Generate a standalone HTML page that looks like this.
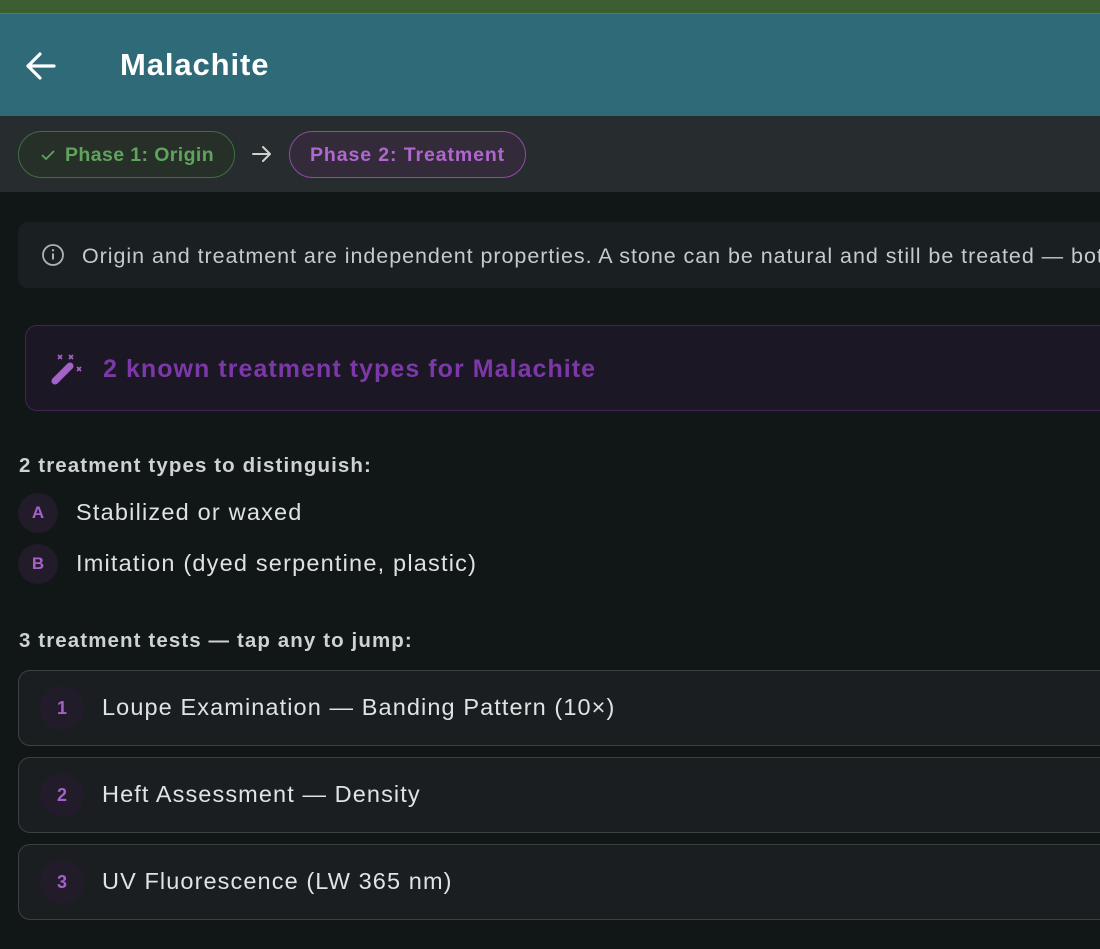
<!DOCTYPE html>
<html><head><style>
*{margin:0;padding:0;box-sizing:border-box}
body{width:1100px;height:949px;overflow:hidden;background:#111617;font-family:"Liberation Sans",sans-serif;position:relative}
.abs{position:absolute}
.top{left:0;top:0;width:1100px;height:14px;background:#3b5e33;border-bottom:1px solid #5a7d4e}
.hdr{left:0;top:14px;width:1100px;height:102px;background:#2e6a77}
.ttl{left:120px;top:47px;color:#fff;font-weight:bold;font-size:31px;letter-spacing:0.9px}
.ph{left:0;top:116px;width:1100px;height:76px;background:#272c2e}
.pill{top:131px;height:47px;border-radius:24px;font-weight:bold;font-size:19.5px;line-height:46px;white-space:nowrap;letter-spacing:0.9px}
.clip{left:0;top:0;width:1100px;height:949px;overflow:hidden}
.info{left:18px;top:222px;width:1082px;height:66px;background:#1a1f21;border-radius:10px 0 0 10px;color:#c5cacd;font-size:21.5px;line-height:68px;padding-left:64px;white-space:nowrap;letter-spacing:0.95px;overflow:hidden}
.purp{left:25px;top:325px;width:1075px;height:86px;background:#1c1724;border:1.5px solid #3f2554;border-right:none;border-radius:12px 0 0 12px;color:#7c38a8;font-weight:bold;font-size:25px;line-height:86px;padding-left:77px;letter-spacing:1.05px;white-space:nowrap}
.h{left:19px;color:#cfd2d3;font-weight:bold;font-size:20.5px;letter-spacing:1.1px;white-space:nowrap}
.b{left:18px;width:40px;height:40px;border-radius:50%;background:#221b2a;color:#a462c9;font-weight:bold;font-size:17px;text-align:center;line-height:40px}
.bt{left:76px;color:#dfe2e3;font-size:23.5px;letter-spacing:1.2px;white-space:nowrap}
.card{left:18px;width:1082px;height:76px;border:1.5px solid #3b4042;border-right:none;border-radius:12px 0 0 12px;background:#1a1e20}
.card .n{position:absolute;left:21px;top:15px;width:44px;height:44px;border-radius:50%;background:#221b2a;color:#a462c9;font-weight:bold;font-size:18px;text-align:center;line-height:44px}
.card .t{position:absolute;left:83px;top:0;line-height:73px;color:#e0e3e4;font-size:23.5px;white-space:nowrap;letter-spacing:1.1px}
</style></head><body>
<div class="abs top"></div>
<div class="abs hdr"></div>
<svg class="abs" style="left:24px;top:50px" width="34" height="32" viewBox="0 0 34 32"><path d="M30 16H4M16 4L4 16l12 12" fill="none" stroke="#fff" stroke-width="3.2" stroke-linecap="round" stroke-linejoin="round"/></svg>
<div class="abs ttl">Malachite</div>
<div class="abs ph"></div>
<div class="abs pill" style="left:18px;width:217px;border:1.5px solid #3f6e3f;color:#5fa35c;background:#263028;padding-left:46px;letter-spacing:0.4px">Phase 1: Origin</div>
<svg class="abs" style="left:40px;top:147px" width="16" height="16" viewBox="0 0 16 16"><path d="M2 8l4 4 8-8" fill="none" stroke="#5fa35c" stroke-width="1.8"/></svg>
<svg class="abs" style="left:251px;top:144px" width="22" height="20" viewBox="0 0 22 20"><path d="M2 10h17M12 3l7 7-7 7" fill="none" stroke="#d0d0d0" stroke-width="2" stroke-linecap="round" stroke-linejoin="round"/></svg>
<div class="abs pill" style="left:289px;width:237px;border:1.5px solid #8a4f9e;color:#b067cf;background:#342b3a;padding-left:20px">Phase 2: Treatment</div>
<div class="abs info">Origin and treatment are independent properties. A stone can be natural and still be treated — both matter.</div>
<svg class="abs" style="left:41px;top:243px" width="24" height="24" viewBox="0 0 24 24"><circle cx="12" cy="12" r="10" fill="none" stroke="#a9b4bb" stroke-width="1.8"/><path d="M12 10.5v6" stroke="#a9b4bb" stroke-width="2"/><circle cx="12" cy="7.3" r="1.2" fill="#a9b4bb"/></svg>
<div class="abs purp">2 known treatment types for Malachite</div>
<svg class="abs" style="left:50px;top:352px" width="36" height="34" viewBox="0 0 36 34"><path d="M5 29l15-15" stroke="#a462c9" stroke-width="7" stroke-linecap="round"/><path d="M8 3l4 4M12 3l-4 4M19 3l4 4M23 3l-4 4M27 15l4 4M31 15l-4 4" stroke="#a462c9" stroke-width="1.6"/></svg>
<div class="abs h" style="top:454px">2 treatment types to distinguish:</div>
<div class="abs b" style="top:493px">A</div><div class="abs bt" style="top:499px">Stabilized or waxed</div>
<div class="abs b" style="top:544px">B</div><div class="abs bt" style="top:550px">Imitation (dyed serpentine, plastic)</div>
<div class="abs h" style="top:629px">3 treatment tests — tap any to jump:</div>
<div class="abs card" style="top:670px"><div class="n">1</div><div class="t">Loupe Examination — Banding Pattern (10×)</div></div>
<div class="abs card" style="top:757px"><div class="n">2</div><div class="t">Heft Assessment — Density</div></div>
<div class="abs card" style="top:844px"><div class="n">3</div><div class="t">UV Fluorescence (LW 365 nm)</div></div>
</body></html>
